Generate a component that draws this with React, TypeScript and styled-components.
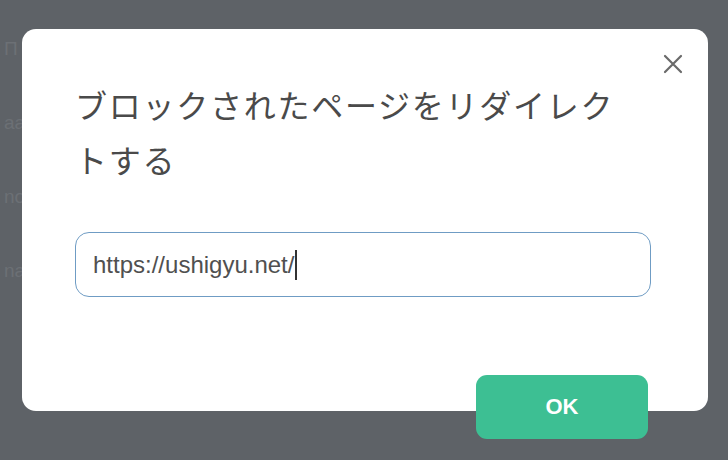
import * as React from 'react'
import styled, {createGlobalStyle} from 'styled-components'

const Global = createGlobalStyle`
  html, body {
    margin: 0;
    padding: 0;
    background: #5e6267;
  }
  body {
    font-family: 'Noto Sans CJK JP', 'Noto Sans', sans-serif;
  }
`

const Screen = styled.div`
  position: relative;
  width: 728px;
  height: 460px;
  overflow: hidden;
  background: #5e6267;
`

const Page = styled.div`
  display: flex;
  flex-direction: column;
  gap: 52px;
  padding: 38px 0 0 4px;
  font-family: 'Liberation Sans', sans-serif;
  font-size: 19px;
  color: #6c7075;
`

const Dialog = styled.div`
  position: absolute;
  left: 22px;
  top: 29px;
  width: 686px;
  height: 382px;
  box-sizing: border-box;
  padding: 48px 57px 0 53px;
  background: #fff;
  border-radius: 14px;
  display: flex;
  flex-direction: column;
`

const CloseButton = styled.button`
  position: absolute;
  top: 17px;
  right: 17px;
  width: 36px;
  height: 36px;
  padding: 0;
  border: none;
  background: none;
  display: flex;
  align-items: center;
  justify-content: center;
  cursor: pointer;
`

const Title = styled.h2`
  margin: 0;
  padding-right: 30px;
  font-size: 32px;
  font-weight: 400;
  line-height: 55px;
  letter-spacing: 1.75px;
  color: #4a4a4a;
`

const Field = styled.div`
  margin-top: 45px;
  height: 65px;
  box-sizing: border-box;
  border: 1.5px solid #6f9cc4;
  border-radius: 14px;
  padding: 0 17px;
  display: flex;
  align-items: center;
  font-family: 'Liberation Sans', 'Noto Sans', sans-serif;
  font-size: 24px;
  color: #505050;
`

const Caret = styled.span`
  display: inline-block;
  width: 1.5px;
  height: 30px;
  margin-left: 1px;
  background: #333;
`

const Footer = styled.div`
  margin-top: auto;
  display: flex;
  justify-content: flex-end;
  padding-right: 3px;
`

const OkButton = styled.button`
  width: 172px;
  height: 64px;
  margin-bottom: -28px;
  border: none;
  border-radius: 11px;
  background: #3dbf93;
  color: #fff;
  font-family: 'Liberation Sans', sans-serif;
  font-weight: 700;
  font-size: 22px;
  cursor: pointer;
`

export default function App(){
  return (
    <Screen>
      <Global />
      <Page>
        <span>Π</span>
        <span>aa</span>
        <span>no</span>
        <span>na</span>
      </Page>
      <Dialog>
        <CloseButton aria-label='close'>
          <svg width='20' height='20' viewBox='0 0 20 20'>
            <path d='M2 2L18 18M18 2L2 18' stroke='#6a6a6a' strokeWidth='2.2' strokeLinecap='round' />
          </svg>
        </CloseButton>
        <Title>ブロックされたページをリダイレクトする</Title>
        <Field>
          https://ushigyu.net/
          <Caret />
        </Field>
        <Footer>
          <OkButton>OK</OkButton>
        </Footer>
      </Dialog>
    </Screen>
  )
}
